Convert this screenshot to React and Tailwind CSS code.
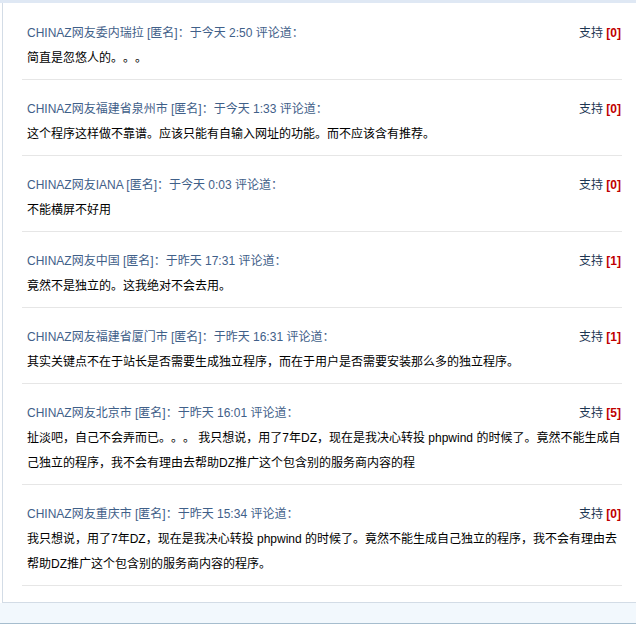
import React from 'react';

const comments = [
  { author: 'CHINAZ网友委内瑞拉', time: '于今天 2:50', votes: 0, text: '简直是忽悠人的。。。' },
  { author: 'CHINAZ网友福建省泉州市', time: '于今天 1:33', votes: 0, text: '这个程序这样做不靠谱。应该只能有自输入网址的功能。而不应该含有推荐。' },
  { author: 'CHINAZ网友IANA', time: '于今天 0:03', votes: 0, text: '不能横屏不好用' },
  { author: 'CHINAZ网友中国', time: '于昨天 17:31', votes: 1, text: '竟然不是独立的。这我绝对不会去用。' },
  { author: 'CHINAZ网友福建省厦门市', time: '于昨天 16:31', votes: 1, text: '其实关键点不在于站长是否需要生成独立程序，而在于用户是否需要安装那么多的独立程序。' },
  { author: 'CHINAZ网友北京市', time: '于昨天 16:01', votes: 5, text: '扯淡吧，自己不会弄而已。。。 我只想说，用了7年DZ，现在是我决心转投 phpwind 的时候了。竟然不能生成自己独立的程序，我不会有理由去帮助DZ推广这个包含别的服务商内容的程' },
  { author: 'CHINAZ网友重庆市', time: '于昨天 15:34', votes: 0, text: '我只想说，用了7年DZ，现在是我决心转投 phpwind 的时候了。竟然不能生成自己独立的程序，我不会有理由去帮助DZ推广这个包含别的服务商内容的程序。' },
];

const CommentItem = ({ comment }) => (
  <div className="pt-[17px] pb-[8px] pl-[5px] border-b border-[#e6e6e6]">
    <div className="flex justify-between h-[25px] leading-[24px] pr-[1px]">
      <span className="text-[#3f6089]">
        {comment.author} [匿名]：{comment.time} 评论道：
      </span>
      <span className="text-[#1d3552]">
        支持 <b className="text-[#c00000]">[{comment.votes}]</b>
      </span>
    </div>
    <p className="leading-[25px] text-black">{comment.text}</p>
  </div>
);

export default function App() {
  return (
    <div
      className="w-[636px] h-[634px] bg-white overflow-hidden text-[12px] [text-spacing-trim:space-all]"
      style={{ fontFamily: '"Liberation Sans", "Noto Sans CJK SC", sans-serif' }}
    >
      <div className="h-[3px] bg-[#dfe8f4]" />
      <div className="ml-[2px] border-l border-b border-[#d3dce6] pl-[19px] pr-[14px] pt-[1px] pb-[16px]">
        {comments.map((c, i) => (
          <CommentItem key={i} comment={c} />
        ))}
      </div>
      <div className="h-[21px] bg-[#f2f8fd] border-b border-[#a6bdce]" />
      <div className="h-[10px] bg-white" />
      <div className="h-px bg-[#cfcfcf]" />
    </div>
  );
}
